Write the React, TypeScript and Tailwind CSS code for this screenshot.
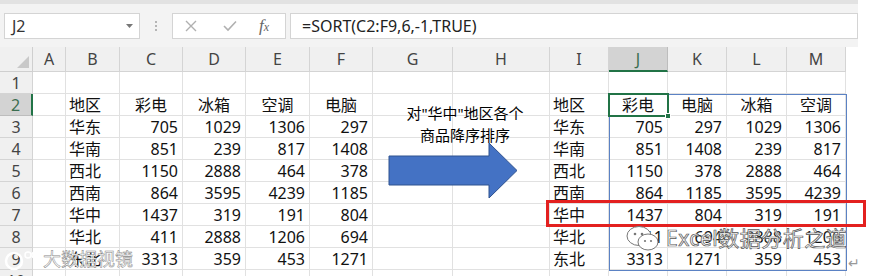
import React from 'react'

const font = { fontFamily: '"Noto Sans", "Noto Sans CJK SC", sans-serif' }

const letters = ['A', 'B', 'C', 'D', 'E', 'F', 'G', 'H', 'I', 'J', 'K', 'L', 'M']

type Cell = string | number

const left: [string, number, number, number, number][] = [
  ['华东', 705, 1029, 1306, 297],
  ['华南', 851, 239, 817, 1408],
  ['西北', 1150, 2888, 464, 378],
  ['西南', 864, 3595, 4239, 1185],
  ['华中', 1437, 319, 191, 804],
  ['华北', 411, 2888, 1206, 694],
  ['东北', 3313, 359, 453, 1271],
]

const right: [string, number, number, number, number][] = [
  ['华东', 705, 297, 1029, 1306],
  ['华南', 851, 1408, 239, 817],
  ['西北', 1150, 378, 2888, 464],
  ['西南', 864, 1185, 3595, 4239],
  ['华中', 1437, 804, 319, 191],
  ['华北', 411, 694, 2888, 1206],
  ['东北', 3313, 1271, 359, 453],
]

const rows: Cell[][] = [
  Array(13).fill(''),
  ['', '地区', '彩电', '冰箱', '空调', '电脑', '', '', '地区', '彩电', '电脑', '冰箱', '空调'],
  ...left.map((l, i) => ['', ...l, '', '', ...right[i]] as Cell[]),
  Array(13).fill(''),
]

function FormulaBar() {
  return (
    <div className="h-[47px] bg-[#f3f3f3] border-t-[4px] border-[#e2e2e2] flex items-start pt-[9px] pl-[4px] w-[858px]">
      <div className="w-[136px] h-[26px] bg-white border border-[#d4d4d4] flex items-center justify-between pl-[7px] pr-[6px]">
        <span className="text-[16px] text-[#333]">J2</span>
        <svg width="7" height="4" viewBox="0 0 7 4"><path d="M0 0h7L3.5 4z" fill="#777" /></svg>
      </div>
      <div className="w-[32px] h-[26px] flex flex-col items-center justify-center gap-[2px]">
        <span className="w-[2px] h-[2px] bg-[#b5b5b5]" />
        <span className="w-[2px] h-[2px] bg-[#b5b5b5]" />
        <span className="w-[2px] h-[2px] bg-[#b5b5b5]" />
      </div>
      <div className="w-[114px] h-[26px] bg-white border border-[#d4d4d4] flex items-center">
        <svg className="ml-[12px]" width="12" height="12" viewBox="0 0 12 12">
          <path d="M1 1l10 10M11 1L1 11" stroke="#b0b0b0" strokeWidth="1.4" />
        </svg>
        <svg className="ml-[26px]" width="14" height="12" viewBox="0 0 14 12">
          <path d="M1 6l4 4L13 1.5" stroke="#b0b0b0" strokeWidth="1.6" fill="none" />
        </svg>
        <span className="ml-[22px] text-[17px] italic text-[#666]" style={{ fontFamily: '"Liberation Serif", serif' }}>
          f<span className="text-[12px]">x</span>
        </span>
      </div>
      <div className="ml-[4px] flex-1 h-[26px] bg-white border border-[#d4d4d4] flex items-center pl-[11px]">
        <span className="text-[16px] text-[#222]">=SORT(C2:F9,6,-1,TRUE)</span>
      </div>
    </div>
  )
}

function Sheet() {
  return (
    <div className="grid grid-cols-[33px_33px_54px_63px_63px_64px_63px_80px_97px_59px_59px_59px_60px_59px] w-[846px] text-[16px] text-[#111]">
      <div className="h-[25px] bg-[#f0f0f0] border-r border-b border-[#cfcfcf] flex items-end justify-end pr-[3px] pb-[3px]">
        <svg width="12" height="12" viewBox="0 0 12 12"><path d="M12 0v12H0z" fill="#c9c9c9" /></svg>
      </div>
      {letters.map((l) =>
        l === 'J' ? (
          <div key={l} className="h-[25px] bg-[#d3d3d3] border-r border-[#bdbdbd] border-b-2 border-b-[#217346] flex items-center justify-center text-[#3b6e50]">
            {l}
          </div>
        ) : (
          <div key={l} className="h-[25px] bg-[#f0f0f0] border-r border-b border-[#d4d4d4] flex items-center justify-center text-[#444]">
            {l}
          </div>
        )
      )}
      {rows.map((r, ri) => (
        <React.Fragment key={ri}>
          {ri === 1 ? (
            <div className="h-[22px] bg-[#d3d3d3] border-b border-[#bdbdbd] border-r-2 border-r-[#217346] flex items-center justify-center text-[#3b6e50]">
              {ri + 1}
            </div>
          ) : (
            <div className="h-[22px] bg-[#f0f0f0] border-r border-b border-[#d4d4d4] flex items-center justify-center text-[#444]">
              {ri + 1}
            </div>
          )}
          {r.map((c, ci) => {
            const centered = ri === 1 && ci !== 1 && ci !== 8
            const cls =
              typeof c === 'number'
                ? 'justify-end pr-[4px]'
                : centered
                  ? 'justify-center'
                  : 'justify-start pl-[3px]'
            return (
              <div key={ci} className={`h-[22px] border-r border-b border-[#e1e1e1] bg-white flex items-center whitespace-nowrap ${cls}`}>
                {c}
              </div>
            )
          })}
        </React.Fragment>
      ))}
    </div>
  )
}

export default function App() {
  return (
    <div className="relative w-[872px] h-[276px] overflow-hidden bg-white" style={font}>
      <FormulaBar />
      <Sheet />

      {/* spill range + active cell */}
      <div className="absolute left-[609px] top-[94px] w-[238px] h-[177px] border border-[#5b82c4]" />
      <div className="absolute left-[608px] top-[93px] w-[61px] h-[24px] border-2 border-[#217346]">
        <div className="absolute -right-[4px] -bottom-[4px] w-[6px] h-[6px] bg-[#217346] border border-white" />
      </div>

      {/* note + arrow */}
      <div className="absolute left-[395px] top-[102px] w-[140px] text-center text-[15px] leading-[22px] text-black">
        对"华中"地区各个
        <br />
        商品降序排序
      </div>
      <svg className="absolute left-[388px] top-[142px]" width="132" height="58" viewBox="0 0 132 58">
        <polygon points="1,14 101,14 101,1 129,28.5 101,56 101,43 1,43" fill="#4472c4" stroke="#2f528f" strokeWidth="1" />
      </svg>

      {/* highlight */}
      <div className="absolute left-[546px] top-[200px] w-[320px] h-[27px] border-[3px] border-[#e3201f]" />

      {/* watermarks */}
      <div className="absolute left-[626px] top-[223px] flex items-center gap-[6px]">
        <svg width="34" height="28" viewBox="0 0 34 28">
          <ellipse cx="13" cy="11" rx="12" ry="9.5" fill="white" stroke="#777" strokeWidth="1" />
          <ellipse cx="22" cy="17" rx="10" ry="8" fill="white" stroke="#777" strokeWidth="1" />
          <circle cx="9" cy="9" r="1.3" fill="#777" />
          <circle cx="16" cy="9" r="1.3" fill="#777" />
          <circle cx="19" cy="16" r="1.1" fill="#777" />
          <circle cx="25" cy="16" r="1.1" fill="#777" />
        </svg>
        <span className="text-[21px] text-white [-webkit-text-stroke:0.7px_#555] tracking-[0.5px] [text-shadow:0_0_2px_#fff]">Excel数据分析之道</span>
      </div>
      <div className="absolute left-[4px] top-[246px] flex items-center gap-[3px]">
        <svg width="36" height="22" viewBox="0 0 36 22">
          <circle cx="10" cy="12" r="8" fill="none" stroke="white" strokeWidth="2.5" />
          <circle cx="24" cy="6" r="3" fill="none" stroke="white" strokeWidth="1.5" />
          <circle cx="31" cy="6" r="3" fill="none" stroke="white" strokeWidth="1.5" />
        </svg>
        <span className="text-[18px] text-white [-webkit-text-stroke:0.5px_#888]">大数据视镜</span>
      </div>
      <span className="absolute left-[848px] top-[255px] text-[14px] leading-[16px] text-[#999]">↵</span>
    </div>
  )
}
